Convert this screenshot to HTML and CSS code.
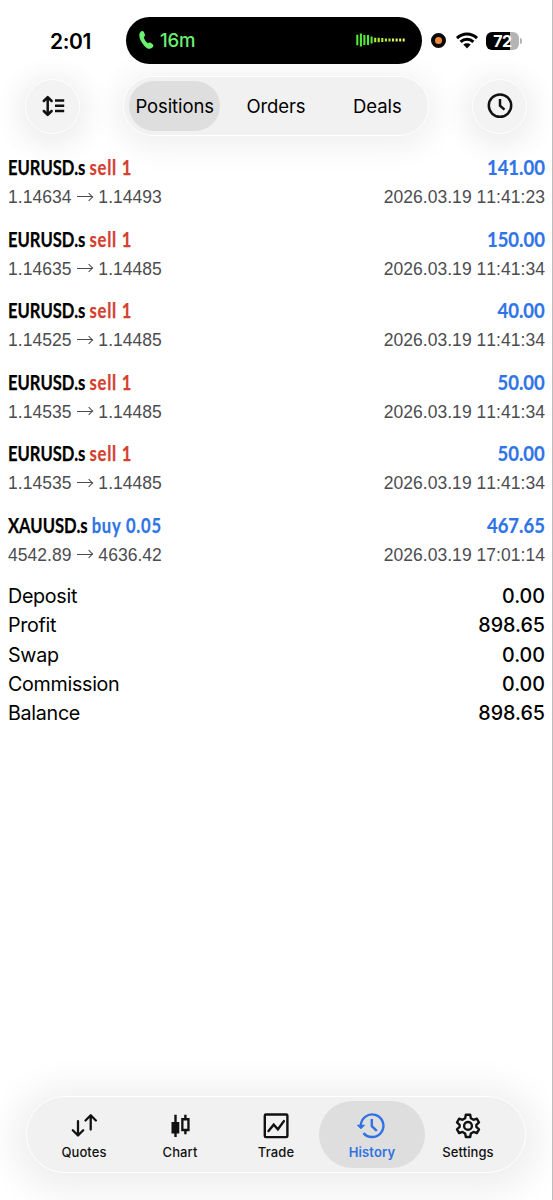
FILE: index.html
```html
<!DOCTYPE html>
<html lang="en">
<head>
<meta charset="utf-8">
<title>History</title>
<link rel="stylesheet" href="styles.css">
</head>
<body>
<div class="screen">
  <header class="status">
    <div class="time">2:01</div>
    <div class="island">
      <svg class="phone" width="15" height="20" viewBox="0 0 15 20"><path d="M1.200 2.200C2.400.7 4.100.5 4.900 2l1 2.500c.4 1.100-.1 1.700-1.100 2.500C5.200 9.500 6.700 11.700 9 13.200c1.100-.8 1.800-1 2.700-.4l2.200 1.700c1 .9.4 2.500-1.200 3.600-2 1.300-4.700.6-7.300-2.200C2 12.400.2 8.400.3 5.100c0-1.300.3-2.200.9-2.900z" fill="#6cf070"/></svg>
      <span class="call">16m</span>
      <svg class="wave" width="50" height="16" viewBox="0 0 50 16"><g stroke="#55e83c" stroke-width="2.100"><path d="M1.300 2.800v10.500M4.900 1.500v13M8.400 3v10M12 3v10M15.600 4.500v7"/></g><g stroke="#a9ef3c" stroke-width="2.100"><path d="M19.200 5.800v4.500M22.700 5.800v4.500M26.300 6v4M29.900 6.500v3M33.500 6.500v3"/></g><g stroke="#e5f06a" stroke-width="2.100"><path d="M37 6.600v2.800M40.600 6.600v2.800M44.200 6.600v2.800M47.700 6.600v2.800"/></g></svg>
    </div>
    <div class="indicators">
      <span class="mic"></span>
      <svg class="wifi" width="22" height="17" viewBox="0 0 22 17"><g fill="none" stroke="#000" stroke-width="3"><path d="M1 6.100C6.700.5 15.300.5 21 6.100"/><path d="M4.600 9.800c3.700-3.500 9.100-3.500 12.800 0"/></g><path d="M7.300 12.600c2.200-1.900 5.200-1.900 7.400 0L11 16.400z"/></svg>
      <span class="battery"><span class="level">72</span></span>
      <span class="cap"></span>
    </div>
  </header>

  <nav class="toolbar">
    <button class="round"><svg width="24" height="22" viewBox="0 0 24 22"><g fill="none" stroke="#111" stroke-width="2.500"><path stroke-linecap="round" stroke-linejoin="round" d="M6.700 2.500v17M2.800 6l3.900-3.900L10.600 6M2.800 16l3.900 3.900 3.900-3.900"/><path d="M14 5.500h9.200M14 10.800h9.200M14 16.100h9.200"/></g></svg></button>
    <div class="segments">
      <button class="segment selected"><span>Positions</span></button>
      <button class="segment"><span>Orders</span></button>
      <button class="segment"><span>Deals</span></button>
    </div>
    <button class="round"><svg width="26" height="26" viewBox="0 0 26 26"><g fill="none" stroke="#111" stroke-width="2.500"><circle cx="13" cy="12.600" r="11.200"/><path d="M13 6.100v6.500l4.500 4"/></g></svg></button>
  </nav>

  <main class="history">
    <article class="deal">
      <div class="line"><b class="name">EURUSD.s <i class="sell">sell 1</i></b><b class="profit">141.00</b></div>
      <div class="line sub"><span>1.14634 <i class="arrow"></i> 1.14493</span><span>2026.03.19 11:41:23</span></div>
    </article>
    <article class="deal">
      <div class="line"><b class="name">EURUSD.s <i class="sell">sell 1</i></b><b class="profit">150.00</b></div>
      <div class="line sub"><span>1.14635 <i class="arrow"></i> 1.14485</span><span>2026.03.19 11:41:34</span></div>
    </article>
    <article class="deal">
      <div class="line"><b class="name">EURUSD.s <i class="sell">sell 1</i></b><b class="profit">40.00</b></div>
      <div class="line sub"><span>1.14525 <i class="arrow"></i> 1.14485</span><span>2026.03.19 11:41:34</span></div>
    </article>
    <article class="deal">
      <div class="line"><b class="name">EURUSD.s <i class="sell">sell 1</i></b><b class="profit">50.00</b></div>
      <div class="line sub"><span>1.14535 <i class="arrow"></i> 1.14485</span><span>2026.03.19 11:41:34</span></div>
    </article>
    <article class="deal">
      <div class="line"><b class="name">EURUSD.s <i class="sell">sell 1</i></b><b class="profit">50.00</b></div>
      <div class="line sub"><span>1.14535 <i class="arrow"></i> 1.14485</span><span>2026.03.19 11:41:34</span></div>
    </article>
    <article class="deal">
      <div class="line"><b class="name">XAUUSD.s <i class="buy">buy 0.05</i></b><b class="profit">467.65</b></div>
      <div class="line sub"><span>4542.89 <i class="arrow"></i> 4636.42</span><span>2026.03.19 17:01:14</span></div>
    </article>
    <dl class="summary">
      <div><dt>Deposit</dt><dd>0.00</dd></div>
      <div><dt>Profit</dt><dd>898.65</dd></div>
      <div><dt>Swap</dt><dd>0.00</dd></div>
      <div><dt>Commission</dt><dd>0.00</dd></div>
      <div><dt>Balance</dt><dd>898.65</dd></div>
    </dl>
  </main>

  <footer class="tabbar">
    <a class="tab"><svg width="28" height="28" viewBox="0 0 28 28"><g fill="none" stroke="#111" stroke-width="2.300" stroke-linecap="round" stroke-linejoin="round"><path d="M8 9.200v14M2.800 18.300l5.200 5.200 5.200-5.200"/><path d="M20.700 17.500V3.500M15.500 8.500l5.200-5.200 5.200 5.200"/></g></svg><span>Quotes</span></a>
    <a class="tab"><svg width="28" height="28" viewBox="0 0 28 28"><path d="M8.300 2.800h2.400V10h2.600v11.500h-2.600V25H8.300v-3.500H5.500V10h2.800z" fill="#111"/><path d="M18.200 2.800h2.400v3.300h3v13.200h-3v3h-2.400v-3h-3V6.100h3zM17.500 8.600v8.200h3.800V8.600z" fill="#111" fill-rule="evenodd"/></svg><span>Chart</span></a>
    <a class="tab"><svg width="28" height="28" viewBox="0 0 28 28"><g fill="none" stroke="#111" stroke-width="2.400"><rect x="2.800" y="2.500" width="22.600" height="22.600" rx="1.200"/><path stroke-linecap="round" d="M6.500 19l5.200-6.300 4.200 4.600 6-8.200"/></g></svg><span>Trade</span></a>
    <a class="tab active"><svg width="28" height="28" viewBox="0 0 28 28"><g fill="none" stroke="#2f72e2" stroke-width="2.400"><path d="M2.800 14A11.300 11.300 0 1 1 5.500 21.100"/><path d="M13.800 7v7.200l5 4.600"/></g><path d="M-.6 13.200h7L3 16.800z" fill="#2f72e2" stroke="#2f72e2" stroke-linejoin="round"/></svg><span>History</span></a>
    <a class="tab"><svg width="28" height="28" viewBox="0 0 28 28"><g transform="translate(.7 .6) scale(.95)" fill="none" stroke="#111" stroke-width="2.500" stroke-linejoin="round"><circle cx="14" cy="14" r="4.100"/><path d="M11.700 2.300h4.600l.7 3.700 2.800 1.600 3.500-1.200 2.300 4-2.800 2.500v2.200l2.800 2.500-2.300 4-3.500-1.200-2.800 1.600-.7 3.700h-4.600l-.7-3.700-2.800-1.600-3.500 1.200-2.300-4 2.800-2.500v-2.200l-2.800-2.500 2.300-4 3.500 1.200L11 6z"/></g></svg><span>Settings</span></a>
  </footer>
</div>
</body>
</html>
```
FILE: styles.css
```css
* { box-sizing: border-box; }
body { margin: 0; background: #fff; font-family: Inter, "Liberation Sans", sans-serif; color: #000; }
button { border: 0; padding: 0; margin: 0; font: inherit; color: inherit; background: none; }
svg { display: block; flex: none; overflow: visible; }
i { font-style: normal; }

.screen { width: 553px; height: 1200px; display: flex; flex-direction: column; overflow: hidden; border-right: 1px solid #bdbdbd; background: #fff; }

.status { height: 76px; padding-top: 17px; display: flex; align-items: flex-start; flex: none; }
.time { width: 126px; padding-left: 50px; line-height: 49px; font-size: 21px; font-weight: 560; letter-spacing: -.4px; }
.island { width: 296px; height: 46.500px; border-radius: 24px; background: #000; display: flex; align-items: center; padding: 0 16px 0 13px; flex: none; }
.call { margin-left: 6px; color: #6cf070; font-size: 18.500px; font-weight: 500; letter-spacing: -.2px; }
.wave { margin-left: auto; }
.indicators { height: 47px; display: flex; align-items: center; padding-left: 9px; }
.mic { width: 15px; height: 15px; border-radius: 50%; background: #ee8a3c; border: 4px solid #0a0a0a; }
.wifi { margin-left: 10px; }
.battery { margin-left: 8px; width: 33px; height: 18px; border-radius: 6px; background: linear-gradient(90deg, #000 72%, #b4b4b4 72%); display: flex; align-items: center; justify-content: center; }
.level { color: #fff; font-size: 16px; line-height: 18px; font-weight: 700; letter-spacing: -.4px; }
.cap { margin-left: 1px; width: 2px; height: 6px; border-radius: 0 3px 3px 0; background: #b4b4b4; }

.toolbar { display: flex; justify-content: space-between; align-items: center; height: 60px; padding: 0 25px 0 25px; flex: none; }
.round { width: 55px; height: 55px; border-radius: 50%; background: #f3f3f3; border: 1.500px solid #fff; box-shadow: 0 5px 28px 8px rgba(0,0,0,.07); display: flex; align-items: center; justify-content: center; }
.segments { width: 306px; height: 60px; border-radius: 30px; background: #f1f1f1; border: 1.500px solid #fff; box-shadow: 0 5px 30px 8px rgba(0,0,0,.06); display: flex; align-items: center; }
.segment { flex: 1; height: 50px; margin: 0 5px; border-radius: 25px; font-size: 18.500px; letter-spacing: -.1px; display: flex; align-items: center; justify-content: center; white-space: nowrap; }
.selected { background: #dedede; }

.history { flex: 1; padding: 16px 7px 0 8px; position: relative; }
.deal { height: 71.500px; padding-top: 2px; }
.line { display: flex; justify-content: space-between; white-space: nowrap; height: 30px; line-height: 26px; }
.name, .profit { font-family: Lato, sans-serif; font-size: 21px; font-weight: 700; }
.name { transform: scaleX(.79); transform-origin: left; -webkit-text-stroke: .25px; }
.profit { color: #2f74e6; transform: scaleX(.88); transform-origin: right; -webkit-text-stroke: .2px; }
.sell, .buy { letter-spacing: 1px; }
.sell { color: #d3402f; }
.buy { color: #2f74e6; }
.sub { font-family: "Liberation Sans", sans-serif; font-size: 17.500px; letter-spacing: .04px; font-kerning: none; color: #4c4c50; }
.arrow { display: inline-block; width: 16px; height: 9px; margin: 0 .5px; background: linear-gradient(#4c4c50, #4c4c50) 0 4px / 15px 1px no-repeat; vertical-align: 2px; position: relative; }
.arrow::after { content: ""; position: absolute; right: 1px; top: 1.500px; width: 5px; height: 5px; border: solid #4c4c50; border-width: 1px 1px 0 0; transform: rotate(45deg); }

.summary { margin: 1px 0 0; font-size: 19.700px; }
.summary div { display: flex; justify-content: space-between; height: 29.250px; line-height: 29.250px; }
.summary dt { letter-spacing: -.3px; }
.summary dd { margin: 0; font-weight: 500; }

.tabbar { flex: none; margin: 0 26px 27px 26px; height: 77px; padding: 0 9px; border-radius: 39px; background: #f1f1f1; border: 1.500px solid #fff; box-shadow: 0 5px 36px 14px rgba(0,0,0,.065); display: flex; align-items: center; }
.tab { flex: 1; height: 67px; border-radius: 34px; display: flex; flex-direction: column; align-items: center; padding-top: 11px; font-size: 13px; font-weight: 500; color: #111; line-height: 16px; }
.tab span { margin-top: 4px; letter-spacing: .1px; }
.active { background: #dedede; color: #2f72e2; margin: 0 -5px; flex: 0 0 106px; font-weight: 600; }
```
